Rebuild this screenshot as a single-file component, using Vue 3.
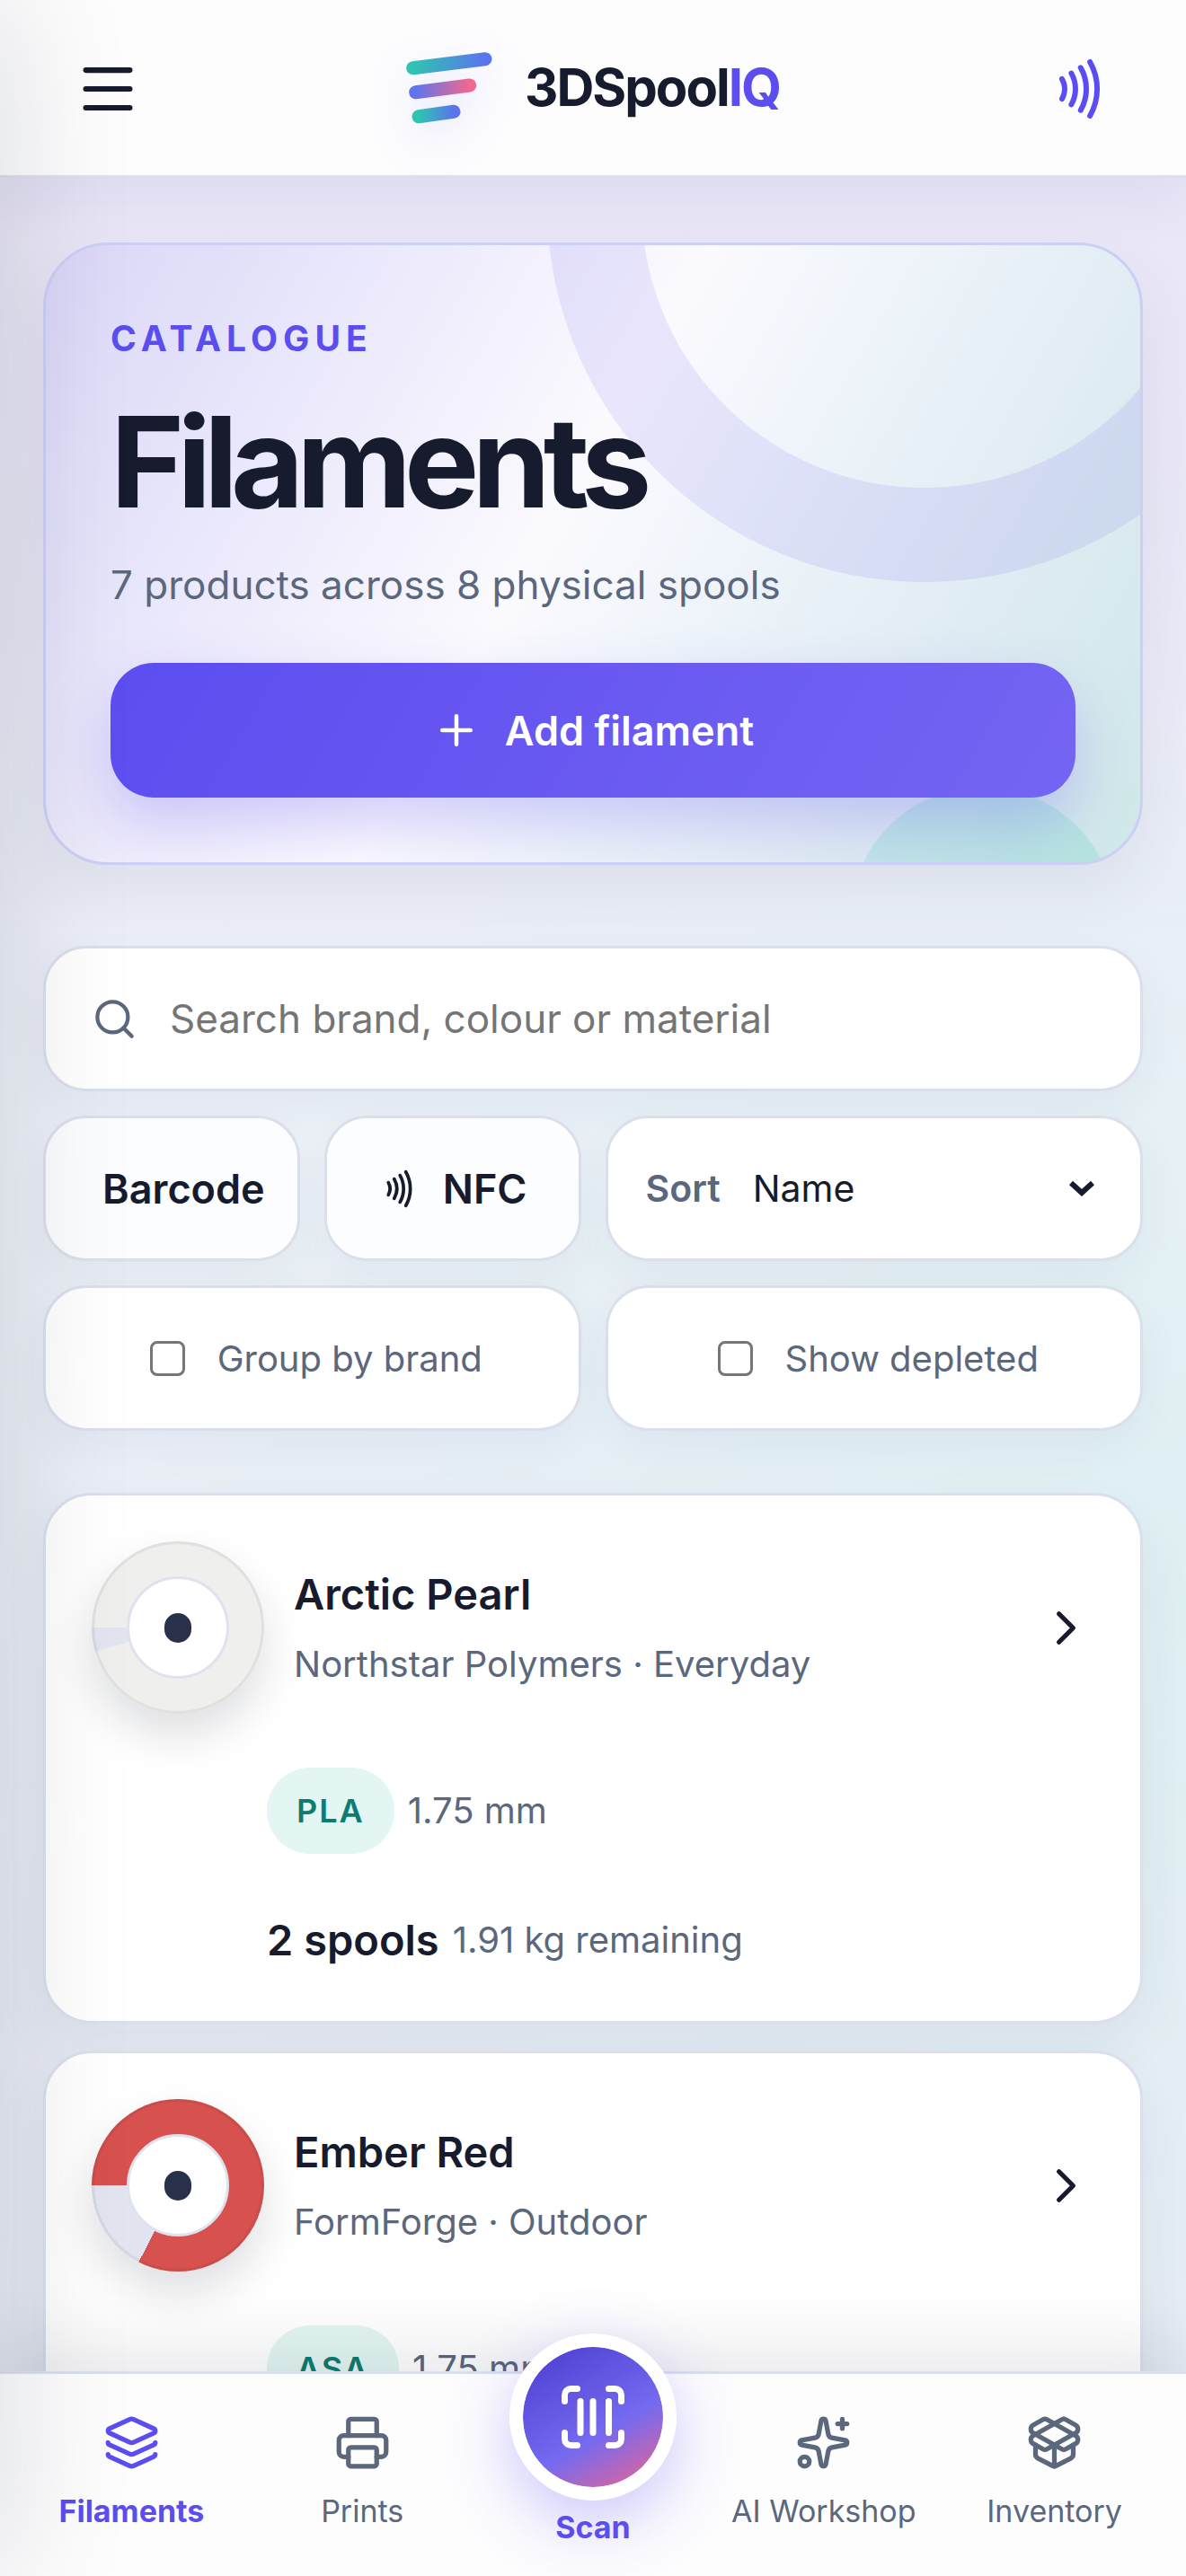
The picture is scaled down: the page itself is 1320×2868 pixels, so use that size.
<script setup>
import { ref } from 'vue'

const search = ref('')
const sort = ref('name')
const groupByBrand = ref(false)
const showDepleted = ref(false)

const filaments = [
  { name: 'Arctic Pearl', brand: 'Northstar Polymers', line: 'Everyday', material: 'PLA', size: '1.75 mm', spools: '2 spools', left: '1.91 kg remaining', color: '#efefed', percent: 95.5 },
  { name: 'Ember Red', brand: 'FormForge', line: 'Outdoor', material: 'ASA', size: '1.75 mm', color: '#d7514e', percent: 82.5 }
]

const spoolFill = (item) => ({
  background: `conic-gradient(from 270deg, ${item.color} 0 ${item.percent}%, #e2e5f0 ${item.percent}% 100%)`
})
</script>

<template>
  <div class="app">
    <header class="topbar">
      <button class="icon-button" type="button" aria-label="Open menu">
        <svg class="menu-icon" viewBox="0 0 24 24"><path d="M3.100 4.400h17.800M3.100 12h17.800M3.100 19.600h17.800" /></svg>
      </button>
      <a class="brand" href="#">
        <svg class="brand-mark" viewBox="0 0 96 80" aria-hidden="true">
          <defs>
            <linearGradient id="teal-blue"><stop offset="0" stop-color="#2ec4b0" /><stop offset="1" stop-color="#5b74ee" /></linearGradient>
            <linearGradient id="blue-pink"><stop offset="0" stop-color="#5f75ee" /><stop offset="1" stop-color="#f0688e" /></linearGradient>
          </defs>
          <path d="M7.700 17.700L88 7.700" stroke="url(#teal-blue)" />
          <path d="M10.700 44.700L70.700 37" stroke="url(#blue-pink)" />
          <path d="M14 71.700L53 66.300" stroke="url(#teal-blue)" />
        </svg>
        <span class="brand-name">3DSpool<span class="accent">IQ</span></span>
      </a>
      <button class="icon-button nfc-button" type="button" aria-label="Read NFC tag">
        <svg class="nfc-large" viewBox="0 0 24 24">
          <path d="M6 8.320a7.430 7.430 0 0 1 0 7.360M9.460 6.210a11.760 11.760 0 0 1 0 11.580M12.910 4.100a15.910 15.910 0 0 1 .01 15.800M16.370 2a20.160 20.160 0 0 1 0 20" />
        </svg>
      </button>
    </header>

    <main class="content">
      <section class="hero">
        <p class="eyebrow">CATALOGUE</p>
        <h1>Filaments</h1>
        <p class="summary">7 products across 8 physical spools</p>
        <button class="add-button" type="button">
          <svg viewBox="0 0 24 24"><path d="M5 12h14M12 5v14" /></svg>
          Add filament
        </button>
      </section>

      <section class="filters" aria-label="Filters">
        <label class="control search">
          <svg viewBox="0 0 24 24"><circle cx="11" cy="11" r="8" /><path d="m21 21-4.300-4.300" /></svg>
          <input v-model="search" type="search" placeholder="Search brand, colour or material" aria-label="Search filaments" />
        </label>
        <button class="control action barcode" type="button">Barcode</button>
        <button class="control action" type="button">
          <svg viewBox="0 0 24 24">
            <path d="M6 8.320a7.430 7.430 0 0 1 0 7.360M9.460 6.210a11.760 11.760 0 0 1 0 11.580M12.910 4.100a15.910 15.910 0 0 1 .01 15.800M16.370 2a20.160 20.160 0 0 1 0 20" />
          </svg>
          NFC
        </button>
        <label class="control sort">
          <span class="sort-label">Sort</span>
          <select v-model="sort">
            <option value="name">Name</option>
            <option value="brand">Brand</option>
          </select>
          <svg viewBox="0 0 28 18"><path d="M2 3l12 11L26 3" /></svg>
        </label>
        <label class="control toggle"><input v-model="groupByBrand" type="checkbox" />Group by brand</label>
        <label class="control toggle"><input v-model="showDepleted" type="checkbox" />Show depleted</label>
      </section>

      <ul class="list">
        <li v-for="item in filaments" :key="item.name">
          <a class="card" href="#">
            <span class="card-head">
              <span class="spool" :style="spoolFill(item)"><span class="hub"></span></span>
              <span class="card-title">
                <strong>{{ item.name }}</strong>
                <span class="muted">{{ item.brand }} · {{ item.line }}</span>
              </span>
              <svg class="chevron" viewBox="0 0 24 24"><path d="m9 18 6-6-6-6" /></svg>
            </span>
            <span class="card-line material"><span class="tag">{{ item.material }}</span><span class="muted">{{ item.size }}</span></span>
            <span v-if="item.spools" class="card-line stock"><strong>{{ item.spools }}</strong><span class="muted">{{ item.left }}</span></span>
          </a>
        </li>
      </ul>
    </main>

    <nav class="tabs" aria-label="Main">
      <a class="tab current" href="#" aria-current="page">
        <svg viewBox="0 0 24 24">
          <path d="M12.830 2.180a2 2 0 0 0-1.660 0L2.600 6.080a1 1 0 0 0 0 1.830l8.580 3.910a2 2 0 0 0 1.660 0l8.580-3.900a1 1 0 0 0 0-1.830z" />
          <path d="M2 12a1 1 0 0 0 .58.91l8.600 3.910a2 2 0 0 0 1.650 0l8.580-3.900A1 1 0 0 0 22 12" />
          <path d="M2 17a1 1 0 0 0 .58.91l8.600 3.910a2 2 0 0 0 1.650 0l8.580-3.900A1 1 0 0 0 22 17" />
        </svg>
        Filaments
      </a>
      <a class="tab" href="#">
        <svg viewBox="0 0 24 24">
          <path d="M6 18H4a2 2 0 0 1-2-2v-5a2 2 0 0 1 2-2h16a2 2 0 0 1 2 2v5a2 2 0 0 1-2 2h-2" />
          <path d="M6 9V3a1 1 0 0 1 1-1h10a1 1 0 0 1 1 1v6" />
          <rect x="6" y="14" width="12" height="8" rx="1" />
        </svg>
        Prints
      </a>
      <a class="tab scan" href="#">
        <span class="scan-disc">
          <svg viewBox="0 0 24 24">
            <path d="M3 7V5a2 2 0 0 1 2-2h2M17 3h2a2 2 0 0 1 2 2v2M21 17v2a2 2 0 0 1-2 2h-2M7 21H5a2 2 0 0 1-2-2v-2M8 7v10M12 7v10M17 7v10" />
          </svg>
        </span>
        Scan
      </a>
      <a class="tab" href="#">
        <svg viewBox="0 0 24 24">
          <path d="M11.017 2.814a1 1 0 0 1 1.966 0l1.051 5.558a2 2 0 0 0 1.594 1.594l5.558 1.051a1 1 0 0 1 0 1.966l-5.558 1.051a2 2 0 0 0-1.594 1.594l-1.051 5.558a1 1 0 0 1-1.966 0l-1.051-5.558a2 2 0 0 0-1.594-1.594l-5.558-1.051a1 1 0 0 1 0-1.966l5.558-1.051a2 2 0 0 0 1.594-1.594z" />
          <path d="M20 2v4M22 4h-4" />
          <circle cx="4" cy="20" r="2" />
        </svg>
        AI Workshop
      </a>
      <a class="tab" href="#">
        <svg viewBox="0 0 24 24">
          <path d="M12 22v-9" />
          <path d="M15.170 2.210a1.670 1.670 0 0 1 1.630 0L21 4.570a1.930 1.930 0 0 1 0 3.360L8.820 14.790a1.655 1.655 0 0 1-1.640 0L3 12.430a1.930 1.930 0 0 1 0-3.360z" />
          <path d="M20 13v3.870a2.060 2.060 0 0 1-1.110 1.830l-6 3.080a1.930 1.930 0 0 1-1.780 0l-6-3.080A2.060 2.060 0 0 1 4 16.870V13" />
          <path d="M21 12.430a1.930 1.930 0 0 0 0-3.360L8.830 2.200a1.640 1.640 0 0 0-1.630 0L3 4.570a1.930 1.930 0 0 0 0 3.360l12.180 6.860a1.636 1.636 0 0 0 1.630 0z" />
        </svg>
        Inventory
      </a>
    </nav>

    <div class="drawer-edge" aria-hidden="true"></div>
  </div>
</template>

<style>
body {
  margin: 0;
}
</style>

<style scoped>
.app {
  --ink: #171b2e;
  --muted: #5b677d;
  --violet: #5b4df0;
  --line: #dbdfeb;
  position: relative;
  display: flex;
  flex-direction: column;
  height: 100vh;
  overflow: hidden;
  color: var(--ink);
  font-family: Inter, "Liberation Sans", sans-serif;
  background:
    radial-gradient(ellipse 90% 36% at 100% 62%, #dff0f3 0%, rgba(223, 240, 243, 0) 100%),
    linear-gradient(180deg, #e9e6f8 0%, #e9e8f7 20%, #edf1f8 45%, #e9edf6 65%, #e7ebf4 100%);
}

.app *,
.app *::before,
.app *::after {
  box-sizing: border-box;
}

svg {
  flex: none;
  fill: none;
  stroke: currentColor;
  stroke-width: 2;
  stroke-linecap: round;
  stroke-linejoin: round;
}

a {
  color: inherit;
  text-decoration: none;
}

button {
  color: inherit;
  font: inherit;
  cursor: pointer;
}

/* Header */
.topbar {
  z-index: 2;
  display: flex;
  flex: none;
  align-items: center;
  justify-content: space-between;
  height: 198px;
  padding: 3px 54px 0;
  background: #fdfdfe;
  border-bottom: 3px solid #dce0ea;
  box-shadow: 0 24px 60px rgba(40, 50, 110, 0.06);
}

.icon-button {
  display: grid;
  place-items: center;
  width: 132px;
  height: 132px;
  padding: 0;
  background: none;
  border: 0;
}

.menu-icon {
  width: 66px;
  height: 66px;
  stroke-width: 2.2;
}

.nfc-button {
  color: var(--violet);
}

.nfc-large {
  width: 72px;
  height: 72px;
}

.brand {
  display: flex;
  gap: 36px;
  align-items: center;
  padding-bottom: 3px;
}

.brand-mark {
  width: 96px;
  height: 80px;
  stroke-width: 15;
  filter: drop-shadow(0 18px 24px rgba(91, 77, 240, 0.14));
}

.brand-name {
  font-size: 58px;
  font-weight: 700;
  line-height: 69px;
  letter-spacing: -2px;
}

.accent {
  color: var(--violet);
}

/* Page body */
.content {
  flex: 1;
  min-height: 0;
  padding: 72px 48px;
  overflow-y: auto;
  scrollbar-width: none;
}

.hero {
  position: relative;
  padding: 72px;
  overflow: hidden;
  background: linear-gradient(120deg, #d8d6f6 0%, #e8e6fb 20%, #fbfafe 46%, #f0f5fb 58%, #e0ecf3 78%, #cfe8e8 100%);
  border: 3px solid #cccff4;
  border-radius: 72px;
  box-shadow: 0 30px 72px rgba(40, 50, 90, 0.07);
}

.hero::before {
  position: absolute;
  top: -465px;
  right: -180px;
  width: 840px;
  height: 840px;
  content: "";
  border: 105px solid rgba(91, 77, 240, 0.11);
  border-radius: 50%;
}

.hero::after {
  position: absolute;
  right: 28px;
  bottom: -210px;
  width: 294px;
  height: 294px;
  content: "";
  background: rgba(46, 196, 176, 0.16);
  border-radius: 50%;
}

.hero > * {
  position: relative;
  z-index: 1;
}

.eyebrow {
  margin: 8px 0 0;
  color: var(--violet);
  font-size: 39px;
  font-weight: 700;
  line-height: 48px;
  letter-spacing: 6px;
}

h1 {
  margin: 36px 0 0;
  font-size: 140px;
  font-weight: 700;
  line-height: 154px;
  letter-spacing: -8px;
}

.summary {
  margin: 27px 0 54px;
  color: var(--muted);
  font-size: 44px;
  line-height: 66px;
}

.add-button {
  display: flex;
  gap: 27px;
  align-items: center;
  justify-content: center;
  width: 100%;
  height: 150px;
  color: #fff;
  font-size: 45px;
  font-weight: 600;
  background: linear-gradient(120deg, #5c4df0, #7565f3);
  border: 0;
  border-radius: 48px;
  box-shadow: 0 30px 66px rgba(91, 77, 240, 0.26);
}

.add-button svg {
  width: 54px;
  height: 54px;
}

/* Filters */
.filters {
  display: grid;
  grid-template-columns: repeat(4, minmax(0, 1fr));
  gap: 27px;
  margin-top: 90px;
}

.control {
  display: flex;
  align-items: center;
  height: 162px;
  padding: 0 42px;
  background: #fff;
  border: 3px solid var(--line);
  border-radius: 48px;
  box-shadow: 0 18px 48px rgba(40, 50, 90, 0.05);
}

.search {
  grid-column: 1 / -1;
  gap: 36px;
  padding-left: 51px;
  color: var(--muted);
}

.search svg {
  width: 51px;
  height: 51px;
}

.search input {
  flex: 1;
  min-width: 0;
  padding: 0;
  color: var(--ink);
  font: inherit;
  font-size: 44px;
  background: none;
  border: 0;
  outline: 0;
  appearance: none;
}

.search input::placeholder {
  color: #757575;
  opacity: 1;
}

.action {
  gap: 27px;
  justify-content: center;
  padding: 0;
  font-size: 45px;
  font-weight: 600;
  background: #fcfdff;
}

.barcode {
  padding-left: 27px;
}

.action svg {
  width: 45px;
  height: 45px;
}

.sort,
.toggle {
  grid-column: span 2;
  font-size: 40px;
}

.sort {
  gap: 36px;
  font-size: 41px;
}

.sort-label {
  color: var(--muted);
  font-weight: 600;
}

.sort select {
  flex: 1;
  min-width: 0;
  padding: 0;
  color: var(--ink);
  font: inherit;
  background: none;
  border: 0;
  appearance: none;
}

.sort svg {
  width: 28px;
  height: 18px;
  margin-right: 9px;
  stroke-width: 6;
  stroke-linecap: butt;
  stroke-linejoin: miter;
}

.toggle {
  gap: 36px;
  justify-content: center;
  padding: 0 30px 0 39px;
  color: var(--muted);
}

.toggle input {
  width: 39px;
  height: 39px;
  margin: 0;
  background: #fff;
  border: 3px solid #767676;
  border-radius: 8px;
  appearance: none;
}

/* Filament list */
.list {
  display: grid;
  gap: 30px;
  padding: 0;
  margin: 69px 0 0;
  list-style: none;
}

.card {
  display: block;
  padding: 51px 51px 57px;
  background: #fff;
  border: 3px solid var(--line);
  border-radius: 54px;
  box-shadow: 0 24px 60px rgba(40, 50, 90, 0.07);
}

.card-head {
  display: flex;
  gap: 33px;
  align-items: center;
}

.spool {
  display: grid;
  flex: none;
  place-items: center;
  width: 192px;
  height: 192px;
  border-radius: 50%;
  box-shadow: inset 0 0 0 3px rgba(23, 27, 46, 0.07), 0 24px 48px rgba(23, 27, 46, 0.14);
}

.hub {
  display: grid;
  place-items: center;
  width: 114px;
  height: 114px;
  background: #fff;
  border: 3px solid #dfe2ee;
  border-radius: 50%;
}

.hub::after {
  width: 30px;
  height: 33px;
  content: "";
  background: #29304a;
  border-radius: 15px;
}

.card-title {
  display: grid;
  flex: 1;
  gap: 15px;
}

.card-title strong,
.stock strong {
  font-size: 47px;
  font-weight: 600;
  line-height: 66px;
}

.muted {
  color: var(--muted);
  font-size: 40px;
  line-height: 60px;
}

.chevron {
  width: 63px;
  height: 63px;
}

.card-line {
  display: flex;
  gap: 15px;
  align-items: center;
  padding-left: 195px;
}

.material {
  margin-top: 60px;
}

.tag {
  padding: 0 33px;
  color: #0c7d70;
  font-size: 36px;
  font-weight: 600;
  line-height: 96px;
  letter-spacing: 2px;
  background: #e3f6f3;
  border-radius: 48px;
}

.stock {
  margin-top: 63px;
}

/* Bottom navigation */
.tabs {
  z-index: 2;
  display: grid;
  flex: none;
  grid-template-columns: repeat(5, minmax(0, 1fr));
  height: 228px;
  padding: 0 18px;
  background: #fdfdfe;
  border-top: 3px solid var(--line);
  box-shadow: 0 -24px 72px rgba(23, 27, 46, 0.1);
}

.tab {
  display: flex;
  flex-direction: column;
  gap: 24px;
  align-items: center;
  padding-top: 45px;
  color: var(--muted);
  font-size: 34px;
  line-height: 42px;
  white-space: nowrap;
}

.tab svg {
  width: 63px;
  height: 63px;
}

.current,
.scan {
  color: var(--violet);
  font-weight: 700;
}

.scan {
  gap: 9px;
  padding-top: 0;
  margin-top: -45px;
}

.scan-disc {
  display: grid;
  place-items: center;
  width: 186px;
  height: 186px;
  color: #fff;
  background: linear-gradient(150deg, #4f42d4 8%, #756af0 60%, #f0648c 100%) padding-box, #fff;
  border: 15px solid #fff;
  border-radius: 50%;
  box-shadow: 0 24px 72px rgba(91, 77, 240, 0.3);
}

.scan-disc svg {
  width: 84px;
  height: 84px;
}

/* Shadow cast by the closed side drawer */
.drawer-edge {
  position: absolute;
  inset: 0 100% 0 -120px;
  z-index: 3;
  width: 120px;
  box-shadow: 0 0 150px rgba(15, 18, 30, 0.16);
  pointer-events: none;
}
</style>
